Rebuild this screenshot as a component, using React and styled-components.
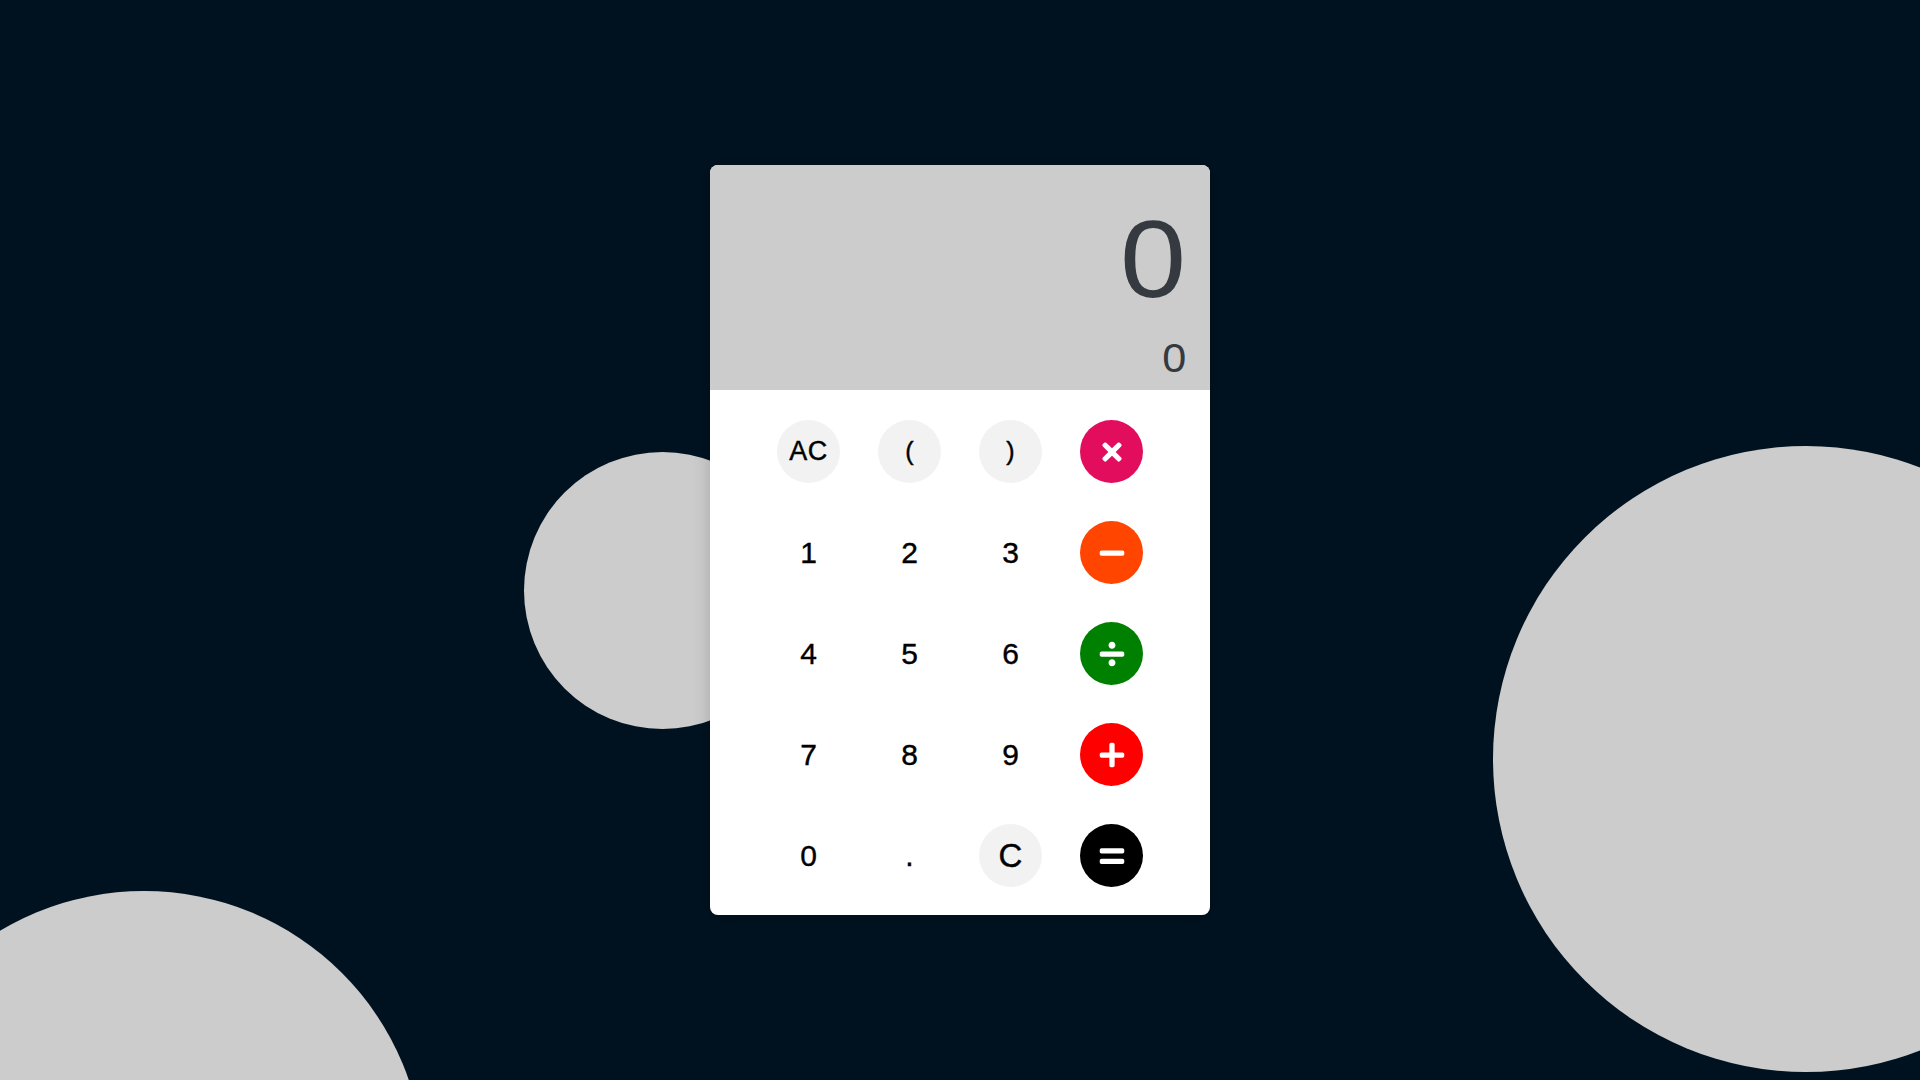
import React, { useState } from 'react'
import styled, { createGlobalStyle } from 'styled-components'
import { FaTimes, FaMinus, FaDivide, FaPlus, FaEquals } from 'react-icons/fa'

const GlobalStyle = createGlobalStyle`
    * { box-sizing: border-box; }
    html, body {
        margin: 0;
        padding: 0;
        background: #001220;
        overflow: hidden;
        font-family: "Liberation Sans", Arial, sans-serif;
    }
`

const Page = styled.div`
    position: relative;
    width: 100vw;
    height: 100vh;
    display: flex;
    align-items: center;
    justify-content: center;
    overflow: hidden;
`

const Blob = styled.div`
    position: absolute;
    border-radius: 50%;
    background: #cccccc;
    left: ${p => p.$x}px;
    top: ${p => p.$y}px;
    width: ${p => p.$size}px;
    height: ${p => p.$size}px;
`

const Calculator = styled.div`
    position: relative;
    z-index: 1;
    width: 500px;
    height: 750px;
    background: #ffffff;
    border-radius: 8px;
    overflow: hidden;
    box-shadow: 0 0 18px rgba(0, 0, 0, 0.18);
    display: flex;
    flex-direction: column;
`

const Display = styled.div`
    height: 225px;
    background: #cccccc;
    display: flex;
    flex-direction: column;
    justify-content: flex-end;
    align-items: flex-end;
    padding: 0 24px 12px;
    color: #343a40;
`

const Current = styled.div`
    font-size: 110px;
    line-height: 110px;
    margin-bottom: 24px;
    transform: scaleX(1.08);
    transform-origin: right center;
`

const Previous = styled.div`
    font-size: 40px;
    line-height: 40px;
    transform: scaleX(1.08);
    transform-origin: right center;
`

const Keypad = styled.div`
    display: grid;
    grid-template-columns: repeat(4, 63px);
    grid-auto-rows: 63px;
    gap: 38px;
    justify-content: center;
    padding: 30px 0 28px;
`

const Key = styled.button`
    width: 63px;
    height: 63px;
    border: none;
    border-radius: 50%;
    padding: 0;
    display: flex;
    align-items: center;
    justify-content: center;
    cursor: pointer;
    background: ${p => p.$bg || 'transparent'};
    color: ${p => p.$color || '#000000'};
    font-family: "Liberation Sans", Arial, sans-serif;
    font-size: ${p => p.$size || 30}px;
    letter-spacing: ${p => p.$spacing || 0}px;
    line-height: 1;
    -webkit-text-stroke: 0.4px ${p => p.$color || '#000000'};
`

const keys = [
    { label: 'AC', bg: '#f2f2f2', size: 27, spacing: 0.5 },
    { label: '(', bg: '#f2f2f2', size: 25 },
    { label: ')', bg: '#f2f2f2', size: 25 },
    { icon: FaTimes, bg: '#e30d5e', color: '#fff', op: '*' },
    { label: '1' }, { label: '2' }, { label: '3' },
    { icon: FaMinus, bg: '#ff4500', color: '#fff', op: '-' },
    { label: '4' }, { label: '5' }, { label: '6' },
    { icon: FaDivide, bg: '#008000', color: '#fff', op: '/' },
    { label: '7' }, { label: '8' }, { label: '9' },
    { icon: FaPlus, bg: '#ff0000', color: '#fff', op: '+' },
    { label: '0' }, { label: '.' },
    { label: 'C', bg: '#f2f2f2', size: 33 },
    { icon: FaEquals, bg: '#000000', color: '#fff', op: '=' },
]

const App = () => {
    const [Expression, setExpression] = useState('')
    const [Result, setResult] = useState('0')

    const onPress = (key) => {
        if (key.label === 'AC') {
            setExpression('')
            setResult('0')
        } else if (key.label === 'C') {
            setExpression(Expression.slice(0, -1))
        } else if (key.op === '=') {
            try {
                // eslint-disable-next-line no-new-func
                const value = Function(`return (${Expression || 0})`)()
                setResult(String(value))
            } catch (e) {
                setResult('Error')
            }
        } else {
            setExpression(Expression + (key.op || key.label))
        }
    }

    return (
        <Page>
            <GlobalStyle />
            <Blob $x={524} $y={452} $size={277} />
            <Blob $x={-136} $y={891} $size={560} />
            <Blob $x={1493} $y={446} $size={626} />
            <Calculator>
                <Display>
                    <Current>{Expression || '0'}</Current>
                    <Previous>{Result}</Previous>
                </Display>
                <Keypad>
                    {keys.map((key, i) => {
                        const Icon = key.icon
                        return (
                            <Key
                                key={i}
                                $bg={key.bg}
                                $color={key.color}
                                $size={key.size}
                                $spacing={key.spacing}
                                onClick={() => onPress(key)}
                            >
                                {Icon ? <Icon size={28} /> : key.label}
                            </Key>
                        )
                    })}
                </Keypad>
            </Calculator>
        </Page>
    )
}

export default App
